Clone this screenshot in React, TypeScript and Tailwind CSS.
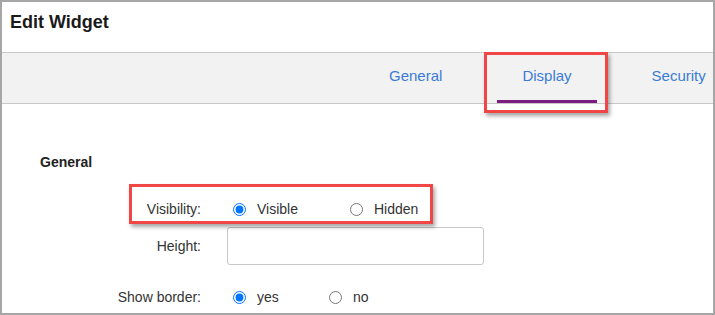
import { ReactNode } from 'react'

const tabs = ['General', 'Display', 'Security']

interface FormRowProps {
  label: string
  children: ReactNode
  className?: string
}

function FormRow({ label, children, className }: FormRowProps) {
  return (
    <div className={`flex items-center ${className ?? ''}`}>
      <span className="w-[199px] shrink-0 text-right text-[14px] leading-[16px] text-[#333333]">
        {label}
      </span>
      <div className="ml-[26px] flex items-center">{children}</div>
    </div>
  )
}

interface RadioOptionProps {
  name: string
  label: string
  checked?: boolean
  width: string
}

function RadioOption({ name, label, checked, width }: RadioOptionProps) {
  return (
    <label className={`flex items-center ${width}`}>
      <input
        type="radio"
        name={name}
        defaultChecked={checked}
        className="m-0 h-[13px] w-[13px]"
      />
      <span className="ml-[11px] text-[14px] leading-[16px] text-[#333333]">
        {label}
      </span>
    </label>
  )
}

export default function App() {
  return (
    <div
      className="relative h-[315px] w-[715px] overflow-hidden border-2 border-[#a6a6a6] bg-white"
      style={{ fontFamily: '"Liberation Sans", Arial, sans-serif' }}
    >
      <header className="h-[51px] border-b border-[#c8c8c8] pl-[8px] pt-[10px]">
        <h1 className="text-[18px] font-bold leading-[20px] text-[#1a1a1a]">
          Edit Widget
        </h1>
      </header>

      <nav className="flex h-[51px] gap-[30px] border-b border-[#c8c8c8] bg-[#f2f2f2] pl-[362px]">
        {tabs.map((tab) => (
          <div key={tab} className="flex shrink-0 flex-col justify-between">
            <span className="px-[25px] pt-[14px] text-[15px] leading-[18px] text-[#3a7bd8]">
              {tab}
            </span>
            <span
              className={`h-[3px] w-full ${tab === 'Display' ? 'bg-[#7b1c80]' : 'bg-transparent'}`}
            />
          </div>
        ))}
      </nav>

      <section className="pt-[50px]">
        <h2 className="pl-[38px] text-[14px] font-bold leading-[16px] text-[#222222]">
          General
        </h2>

        <FormRow label="Visibility:" className="mt-[27px] h-[24px]">
          <div className="ml-[6px] flex items-center">
            <RadioOption name="visibility" label="Visible" checked width="w-[117px]" />
            <RadioOption name="visibility" label="Hidden" width="w-[90px]" />
          </div>
        </FormRow>

        <FormRow label="Height:" className="mt-[6px] h-[38px]">
          <input
            type="text"
            className="h-[38px] w-[257px] rounded-[3px] border border-[#c8c8c8] bg-white"
          />
        </FormRow>

        <FormRow label="Show border:" className="mt-[20px] h-[24px]">
          <div className="ml-[6px] flex items-center">
            <RadioOption name="border" label="yes" checked width="w-[96px]" />
            <RadioOption name="border" label="no" width="w-[60px]" />
          </div>
        </FormRow>
      </section>

      {/* callout boxes drawn over the screenshot */}
      <div className="pointer-events-none absolute left-[482px] top-[50px] h-[61px] w-[124px] border-[3px] border-[#f04646] shadow-[2px_3px_4px_rgba(0,0,0,0.35)]" />
      <div className="pointer-events-none absolute left-[127px] top-[182px] h-[40px] w-[304px] border-[3px] border-[#f04646] shadow-[2px_3px_4px_rgba(0,0,0,0.35)]" />
    </div>
  )
}
